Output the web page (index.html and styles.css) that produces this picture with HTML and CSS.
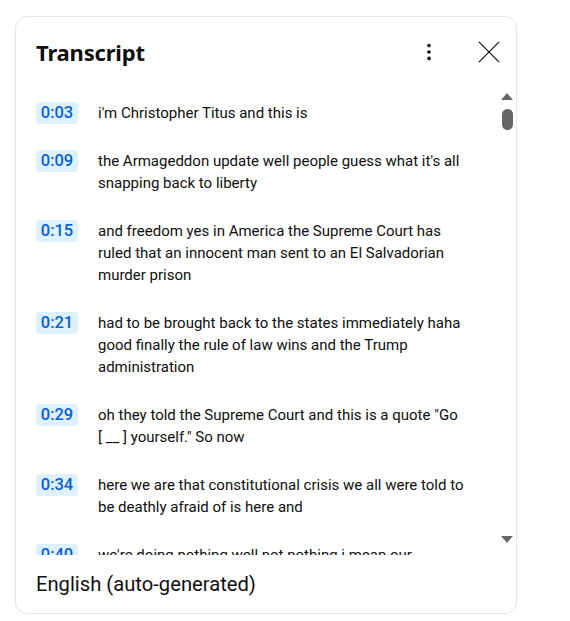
FILE: index.html
```html
<!DOCTYPE html>
<html lang="en">
<head>
<meta charset="UTF-8">
<meta name="viewport" content="width=device-width, initial-scale=1.0">
<title>Transcript</title>
<link rel="stylesheet" href="styles.css">
</head>
<body>

<div class="panel">
  <div class="panel-header">
    <h2 class="panel-title">Transcript</h2>
    <button class="icon-btn" aria-label="More actions">
      <svg width="24" height="24" viewBox="0 0 24 24"><circle cx="12" cy="5" r="2" fill="#0f0f0f"/><circle cx="12" cy="12" r="2" fill="#0f0f0f"/><circle cx="12" cy="19" r="2" fill="#0f0f0f"/></svg>
    </button>
    <button class="icon-btn close-btn" aria-label="Close transcript">
      <svg width="24" height="24" viewBox="0 0 24 24"><path d="M1 1 L23 23 M23 1 L1 23" stroke="#0f0f0f" stroke-width="1.3" fill="none"/></svg>
    </button>
  </div>

  <div class="panel-body">
    <div class="segments">
      <div class="segment">
        <div class="timestamp">0:03</div>
        <div class="segment-text">i'm Christopher Titus and this is</div>
      </div>
      <div class="segment">
        <div class="timestamp">0:09</div>
        <div class="segment-text">the Armageddon update well people guess what it's all snapping back to liberty</div>
      </div>
      <div class="segment">
        <div class="timestamp">0:15</div>
        <div class="segment-text">and freedom yes in America the Supreme Court has ruled that an innocent man sent to an El Salvadorian murder prison</div>
      </div>
      <div class="segment">
        <div class="timestamp">0:21</div>
        <div class="segment-text">had to be brought back to the states immediately haha good finally the rule of law wins and the Trump administration</div>
      </div>
      <div class="segment">
        <div class="timestamp">0:29</div>
        <div class="segment-text">oh they told the Supreme Court and this is a quote "Go [&nbsp;__&nbsp;] yourself." So now</div>
      </div>
      <div class="segment">
        <div class="timestamp">0:34</div>
        <div class="segment-text">here we are that constitutional crisis we all were told to be deathly afraid of is here and</div>
      </div>
      <div class="segment">
        <div class="timestamp">0:40</div>
        <div class="segment-text">we're doing nothing well not nothing i mean our</div>
      </div>
    </div>
    <div class="scrollbar">
      <div class="arrow-up"></div>
      <div class="thumb"></div>
      <div class="track"></div>
      <div class="arrow-down"></div>
    </div>
  </div>

  <div class="panel-footer">English (auto-generated)</div>
</div>

</body>
</html>
```

FILE: styles.css
```css
body {
  margin: 0;
  padding: 0;
  background-color: #ffffff;
  font-family: Roboto, 'Liberation Sans', sans-serif;
  color: #0f0f0f;
}

.panel {
  margin: 16px 0 0 15px;
  width: 500px;
  height: 596px;
  border: 1px solid #e5e5e5;
  border-radius: 12px;
  display: flex;
  flex-direction: column;
  overflow: hidden;
}

.panel-header {
  height: 70px;
  display: flex;
  align-items: center;
  padding-left: 20px;
}

.panel-title {
  flex: 1;
  margin: 0;
  font-family: 'Noto Sans', sans-serif;
  font-size: 22px;
  font-weight: 700;
  letter-spacing: -0.2px;
}

.icon-btn {
  width: 40px;
  height: 40px;
  padding: 0;
  border: none;
  background: none;
  display: flex;
  align-items: center;
  justify-content: center;
  cursor: pointer;
}

.icon-btn svg {
  width: 22px;
  height: 22px;
}

.close-btn {
  margin-left: 20px;
  margin-right: 7px;
}

.panel-body {
  flex: 1;
  display: flex;
  min-height: 0;
}

.segments {
  flex: 1;
  overflow: hidden;
  padding: 15px 0 0 20px;
}

.segment {
  display: flex;
  align-items: flex-start;
  gap: 20px;
  margin-bottom: 26px;
}

.timestamp {
  flex: none;
  width: 42px;
  height: 22px;
  line-height: 22px;
  border-radius: 4px;
  background-color: #def1ff;
  color: #065fd4;
  font-size: 16.5px;
  font-weight: 500;
  text-align: center;
}

.segment-text {
  width: 368px;
  font-size: 15px;
  line-height: 22px;
}

.scrollbar {
  flex: none;
  width: 14px;
  margin-right: 2px;
  padding: 6px 0 6px;
  display: flex;
  flex-direction: column;
  align-items: center;
}

.arrow-up {
  width: 0;
  height: 0;
  border-left: 6px solid transparent;
  border-right: 6px solid transparent;
  border-bottom: 7px solid #676767;
}

.thumb {
  margin-top: 9px;
  width: 11px;
  height: 21px;
  border-radius: 6px;
  background-color: #676767;
}

.track {
  flex: 1;
}

.arrow-down {
  width: 0;
  height: 0;
  border-left: 6px solid transparent;
  border-right: 6px solid transparent;
  border-top: 7px solid #676767;
  margin-bottom: 6px;
}

.panel-footer {
  height: 58px;
  display: flex;
  align-items: center;
  padding-left: 20px;
  font-size: 20.2px;
}
```
